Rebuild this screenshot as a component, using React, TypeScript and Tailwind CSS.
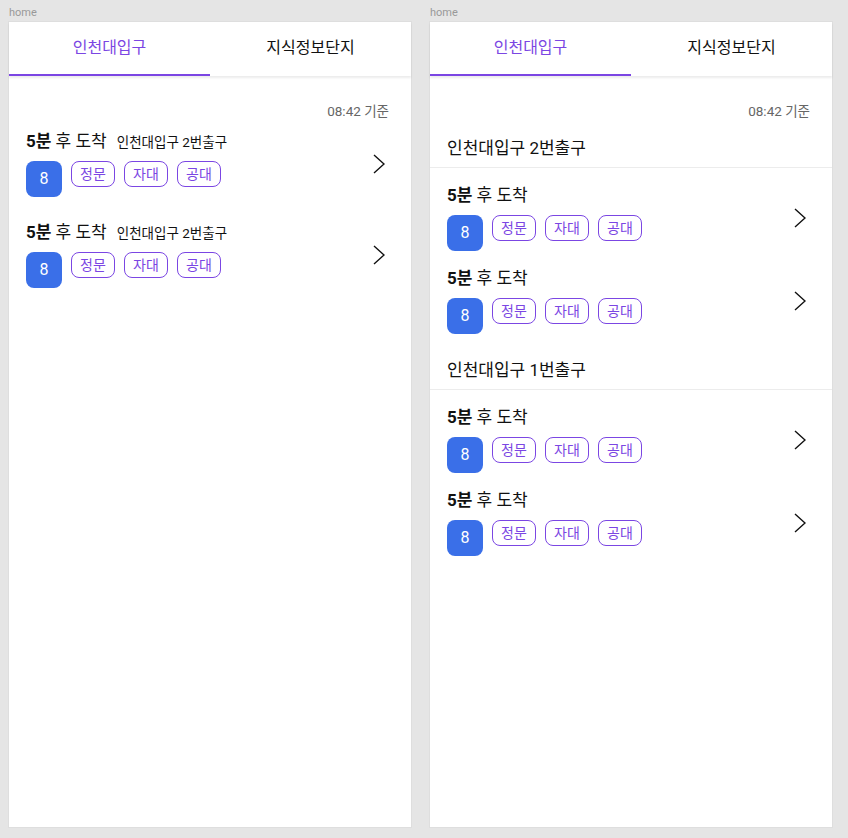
import React from "react";

const font = { fontFamily: "Roboto, 'Noto Sans CJK KR', sans-serif" };

function Chevron() {
  return (
    <svg width="12" height="20" viewBox="0 0 12 20" fill="none" className="shrink-0">
      <path d="M1 1L11 10L1 19" stroke="#111" strokeWidth="1.4" />
    </svg>
  );
}

function Tags() {
  return (
    <div className="flex items-start gap-[9px]">
      <div className="flex h-[36px] w-[36px] items-center justify-center rounded-[8px] bg-[#3a6fe8] text-[16px] text-white">
        8
      </div>
      {["정문", "자대", "공대"].map((t) => (
        <span
          key={t}
          className="flex h-[26px] w-[44px] items-center justify-center rounded-[8px] border border-[#7b46e3] text-[14px] leading-none text-[#7b46e3]"
        >
          {t}
        </span>
      ))}
    </div>
  );
}

function Arrival({ exit }: { exit?: string }) {
  return (
    <div className="flex items-center justify-between pr-[26px]">
      <div className="flex flex-col gap-[7px]">
        <div className="flex h-[24px] items-center gap-[10px]">
          <span className="text-[17px] text-[#111]">
            <b className="font-bold">5분</b> 후 도착
          </span>
          {exit && <span className="text-[13.5px] text-[#111]">{exit}</span>}
        </div>
        <Tags />
      </div>
      <Chevron />
    </div>
  );
}

function TabBar() {
  return (
    <div className="relative z-10 flex h-[54px] shadow-[0_2px_2px_rgba(0,0,0,0.08)]">
      <div className="flex flex-1 items-center justify-center border-b-2 border-[#7b46e3] text-[16px] text-[#7b46e3]">
        인천대입구
      </div>
      <div className="flex flex-1 items-center justify-center border-b-2 border-transparent text-[16px] text-[#111]">
        지식정보단지
      </div>
    </div>
  );
}

function Time() {
  return (
    <div className="flex h-[20px] items-center justify-end pr-[22px] text-[13.5px] text-[#666]">
      08:42 기준
    </div>
  );
}

function Section({ title }: { title: string }) {
  return (
    <div className="flex flex-col">
      <div className="flex h-[24px] items-center pl-[17px] text-[17px] text-[#111]">{title}</div>
      <div className="mt-[6px] h-px bg-[#ececec]" />
      <div className="flex flex-col gap-[16px] pl-[17px] pt-[16px]">
        <Arrival />
        <Arrival />
      </div>
    </div>
  );
}

function Frame({ children }: { children: React.ReactNode }) {
  return (
    <div className="flex flex-col">
      <div className="h-[16px] text-[11px] leading-[14px] text-[#999]">home</div>
      <div className="h-[805px] w-[402px] bg-white ring-1 ring-[#dedede]">
        <TabBar />
        {children}
      </div>
    </div>
  );
}

export default function App() {
  return (
    <div className="flex h-[838px] gap-[19px] bg-[#e5e5e5] pl-[9px] pt-[6px]" style={font}>
      <Frame>
        <div className="pt-[25px]">
          <Time />
          <div className="flex flex-col gap-[24px] pl-[17px] pt-[9px]">
            <Arrival exit="인천대입구 2번출구" />
            <Arrival exit="인천대입구 2번출구" />
          </div>
        </div>
      </Frame>
      <Frame>
        <div className="pt-[25px]">
          <Time />
          <div className="flex flex-col gap-[25px] pt-[16px]">
            <Section title="인천대입구 2번출구" />
            <Section title="인천대입구 1번출구" />
          </div>
        </div>
      </Frame>
    </div>
  );
}
